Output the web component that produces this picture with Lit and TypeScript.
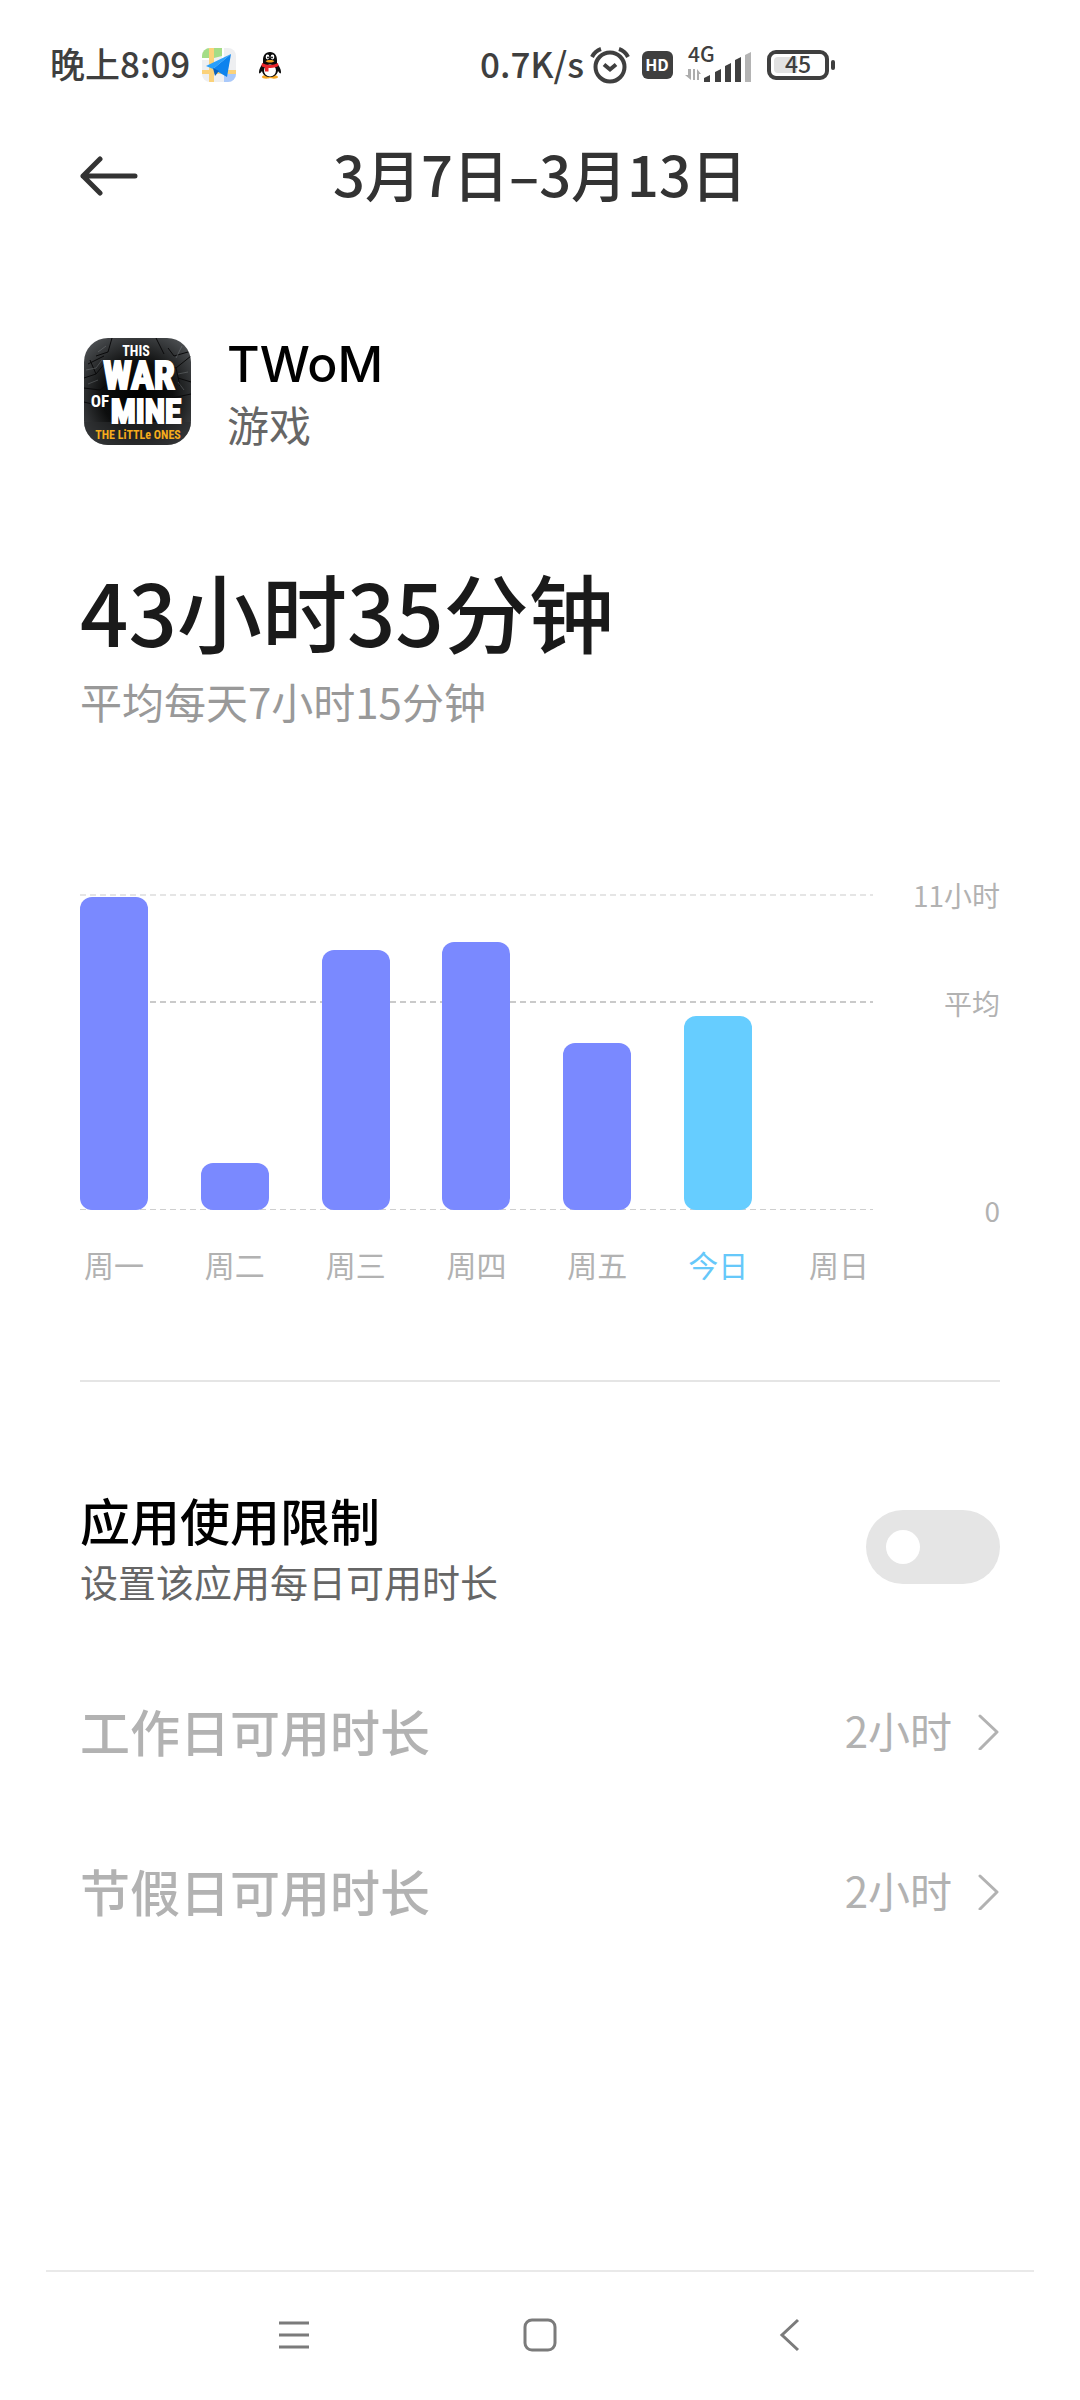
import { LitElement, html, css, svg } from "lit";
import { customElement, state } from "lit/decorators.js";
import { classMap } from "lit/directives/class-map.js";
import { styleMap } from "lit/directives/style-map.js";

interface Day {
  label: string;
  /** Share of the axis maximum, in percent. */
  share: number;
  today?: boolean;
}

const DAYS: Day[] = [
  { label: "周一", share: 99 },
  { label: "周二", share: 15 },
  { label: "周三", share: 82.4 },
  { label: "周四", share: 84.8 },
  { label: "周五", share: 52.8 },
  { label: "今日", share: 61.4, today: true },
  { label: "周日", share: 0 },
];

const GUIDES = [
  { label: "11小时", at: 99.7, kind: "max" },
  { label: "平均", at: 65.5, kind: "mean" },
  { label: "0", at: 0, kind: "base" },
];

const LIMITS = [
  { label: "工作日可用时长", value: "2小时" },
  { label: "节假日可用时长", value: "2小时" },
];

@customElement("status-bar")
export class StatusBar extends LitElement {
  static styles = css`
    :host {
      display: flex;
      align-items: center;
      height: 62px;
      padding: 34px 0 40px;
      color: #3f3f3f;
      font-size: 35px;
      font-weight: 500;
      line-height: 56px;
      white-space: nowrap;
    }
    svg { display: block; flex: none; overflow: visible; }
    span { padding-bottom: 4px; }
    .left {
      box-sizing: border-box;
      flex: 0 0 40%;
      display: flex;
      align-items: center;
      padding-left: 50px;
    }
    .map { margin-left: 12px; }
    .penguin { margin-left: 22px; }
    .right {
      display: flex;
      align-items: center;
      padding-left: 48px;
    }
    .alarm { margin-left: 6px; }
    .hd { margin-left: 12px; }
    .signal { margin-left: 12px; }
    .battery { margin-left: 14px; }
    text { font-family: "Noto Sans CJK SC", sans-serif; }
  `;

  render() {
    return html`
      <div class="left">
        <span>晚上8:09</span>
        <svg class="map" width="34" height="34" viewBox="0 0 34 34" aria-hidden="true">
          <clipPath id="mapClip"><rect width="34" height="34" rx="8" /></clipPath>
          <g clip-path="url(#mapClip)">
            <rect width="34" height="34" fill="#eeeff1" />
            <path d="M0 0h7v10H0z" fill="#a4dd86" />
            <path d="M12 0h8v8l-8 2z" fill="#a4dd86" />
            <path d="M22 26h12v8H22z" fill="#a9c9fb" />
            <path d="M7 0h5v34H7zM0 22h34v4H0z" fill="#fbd27a" />
            <path d="M20 0h2v22h-2zM0 10h7v2H0z" fill="#fff" />
          </g>
          <path d="M29 6L4 18l7 3z" fill="#29a0fb" />
          <path d="M29 6L11 21l14 8z" fill="#0d83ee" />
          <path d="M11 20l2 8 4-5z" fill="#0861c0" />
        </svg>
        <svg class="penguin" width="24" height="28" viewBox="0 0 24 28" aria-hidden="true">
          <path d="M4 26c0-2 4-2 7-1 3-1 9-1 9 1s-6 2-8 1c-2 1-8 1-8-1z" fill="#f5a623" />
          <path d="M12 1c5 0 7 4 7 8v3c2 3 4 6 4 9 0 2-1 2-3-1-1 4-4 6-8 6s-7-2-8-6c-2 3-3 3-3 1 0-3 2-6 4-9V9c0-4 2-8 7-8z" fill="#0b0b0b" />
          <ellipse cx="12" cy="19.500" rx="6" ry="6" fill="#fff" />
          <ellipse cx="9.500" cy="6" rx="1.800" ry="2.400" fill="#fff" />
          <ellipse cx="14.500" cy="6" rx="1.800" ry="2.400" fill="#fff" />
          <circle cx="10" cy="6.400" r="0.900" /><circle cx="14" cy="6.400" r="0.900" />
          <path d="M7.500 10c2-1.500 7-1.500 9 0-2 2-7 2-9 0z" fill="#f5a623" />
          <path d="M4 12c5 2.500 11 2.500 16 0l.500 3c-4 2-8 2-10 2v3.500H7V16.500c-1 0-3-1-3.500-1.500z" fill="#e8262b" />
        </svg>
      </div>
      <div class="right">
        <span>0.7K/s</span>
        <svg class="alarm" width="40" height="38" viewBox="0 0 40 38" fill="none" stroke="#3f3f3f" stroke-width="4" aria-hidden="true">
          <circle cx="20" cy="21" r="14.500" />
          <path d="M14 18.500l6 5 6-5" />
          <path d="M2 11Q5 5 11 3M38 11Q35 5 29 3" />
        </svg>
        <svg class="hd" width="31" height="30" viewBox="0 0 31 30" aria-hidden="true">
          <rect y="1" width="31" height="28" rx="6" fill="#3f3f3f" />
          <text x="15" y="21" text-anchor="middle" font-size="16" font-weight="700" fill="#fff">HD</text>
        </svg>
        <svg class="signal" width="68" height="40" viewBox="0 0 68 40" aria-hidden="true">
          <text x="3" y="17" font-size="21" font-weight="500" fill="#3f3f3f">4G</text>
          <path d="M3 24h3v11L0 30h3zM8 24h2v11H8zM12 35V24l4 5h-2v6z" fill="#adadad" />
          <path d="M19 33l6-3v7h-6zM30 27l6-3v13h-6zM40 21l6-3v19h-6zM50 15l6-3v25h-6z" fill="#3f3f3f" />
          <path d="M60 10l6-3v30h-6z" fill="#b4b4b4" />
        </svg>
        <svg class="battery" width="68" height="30" viewBox="0 0 68 30" aria-hidden="true">
          <rect x="2" y="2" width="58" height="26" rx="7" fill="none" stroke="#3f3f3f" stroke-width="4" />
          <path d="M11 7h19v16H11a4 4 0 0 1-4-4v-8a4 4 0 0 1 4-4z" fill="#e2e2e2" />
          <rect x="64" y="10" width="4" height="10" rx="2" fill="#3f3f3f" />
          <text x="31" y="23" text-anchor="middle" font-size="23" font-weight="500" fill="#3f3f3f">45</text>
        </svg>
      </div>
    `;
  }
}

@customElement("game-icon")
export class GameIcon extends LitElement {
  static styles = css`
    :host { display: block; flex: none; width: 107px; height: 107px; }
    svg { display: block; width: 100%; height: 100%; }
    .word,
    .scrawl {
      font-family: "Roboto Condensed", "Open Sans Condensed", Roboto, sans-serif;
      font-weight: 700;
    }
    .word { fill: #fff; stroke: #fff; }
    .scrawl { fill: #f6ac1c; }
  `;

  render() {
    return svg`
      <svg viewBox="0 0 107 107" role="img" aria-label="TWoM">
        <defs>
          <clipPath id="tile"><rect width="107" height="107" rx="24" /></clipPath>
          <radialGradient id="glow" cx="50%" cy="55%" r="66%">
            <stop offset="0" stop-color="#000" />
            <stop offset="0.500" stop-color="#0d0e0e" />
            <stop offset="1" stop-color="#4c4f52" />
          </radialGradient>
        </defs>
        <g clip-path="url(#tile)">
          <rect width="107" height="107" fill="url(#glow)" />
          <path d="M0 84h107v23H0z" fill="#2c2d2e" opacity="0.600" />
          <g fill="none" stroke="#0a0a0b" stroke-width="1">
            <path d="M0 40l12-4 10-12M12 36l-6-14M4 26L20 18M0 50l16 2 8-6M107 18L92 30l-8-4M92 30l4 18M107 44l-13-4M84 10l6 8 14-4M72 0l8 16M28 0l-4 14-12 4M88 60l19-4M0 64l8 2" />
          </g>
          <g fill="none" stroke="#85898c" stroke-width="1" opacity="0.400">
            <path d="M2 32l10-2 6-8M98 8l-6 12M104 34l-10 2M4 46l10-4M100 52l-6-8M22 8l-8 6" />
          </g>
        </g>
        <text class="word" x="52" y="18" text-anchor="middle" font-size="14" stroke-width="0">THIS</text>
        <text class="word" x="55" y="51" text-anchor="middle" font-size="38" stroke-width="2">WAR</text>
        <text class="word" x="16" y="69" text-anchor="middle" font-size="17" stroke-width="0">OF</text>
        <text class="word" x="62" y="85" text-anchor="middle" font-size="33" stroke-width="2">MINE</text>
        <text class="scrawl" x="54" y="101" text-anchor="middle" font-size="12">THE LiTTLe ONES</text>
      </svg>
    `;
  }
}

@customElement("usage-chart")
export class UsageChart extends LitElement {
  static styles = css`
    :host {
      display: grid;
      grid-template-columns: 1fr 127px;
      row-gap: 34px;
      color: #b2b2b2;
    }
    .plot {
      position: relative;
      display: flex;
      justify-content: space-between;
      align-items: flex-end;
      height: 316px;
    }
    .guide {
      position: absolute;
      left: 0;
      right: 0;
      height: 2px;
      background: repeating-linear-gradient(to right, #e5e5e5 0 6px, transparent 6px 10px);
    }
    .guide.mean { background: repeating-linear-gradient(to right, #cacaca 0 6px, transparent 6px 10px); }
    .guide.base { height: 1px; background: repeating-linear-gradient(to right, #cfcfcf 0 6px, transparent 6px 10px); }
    .guide.max { transform: translateY(1px); }
    .bar {
      position: relative;
      width: 68px;
      border-radius: 12px;
      background: #7a89ff;
    }
    .bar.today { background: #66cdff; }
    .axis { position: relative; }
    .tick {
      position: absolute;
      right: 0;
      font-size: 28px;
      line-height: 36px;
      transform: translateY(50%);
    }
    .names {
      display: flex;
      justify-content: space-between;
      font-size: 30px;
      line-height: 40px;
    }
    .name { width: 68px; text-align: center; }
    .name.today { color: #66c8fa; }
  `;

  render() {
    return html`
      <div class="plot">
        ${GUIDES.map(
          (g) => html`<div class="guide ${g.kind}" style=${styleMap({ bottom: `${g.at}%` })}></div>`
        )}
        ${DAYS.map(
          (d) => html`<div
            class=${classMap({ bar: true, today: !!d.today })}
            style=${styleMap({ height: `${d.share}%` })}
          ></div>`
        )}
      </div>
      <div class="axis">
        ${GUIDES.map(
          (g) => html`<span class="tick" style=${styleMap({ bottom: `${g.at}%` })}>${g.label}</span>`
        )}
      </div>
      <div class="names">
        ${DAYS.map(
          (d) => html`<span class=${classMap({ name: true, today: !!d.today })}>${d.label}</span>`
        )}
      </div>
    `;
  }
}

@customElement("system-nav")
export class SystemNav extends LitElement {
  static styles = css`
    :host { display: block; padding: 0 46px; }
    .keys {
      display: grid;
      grid-template-columns: repeat(3, 25%);
      justify-content: center;
      height: 128px;
      border-top: 2px solid #e9e9e9;
    }
    button {
      display: grid;
      place-items: center;
      padding: 0 0 2px;
      border: 0;
      background: none;
    }
    svg { display: block; fill: none; stroke: #7b7b7b; stroke-width: 3; }
  `;

  render() {
    return html`
      <nav class="keys">
        <button type="button" aria-label="最近任务">
          <svg width="36" height="36" viewBox="0 0 36 36"><path d="M4 6h30M4 18h30M4 30h30" /></svg>
        </button>
        <button type="button" aria-label="主页">
          <svg width="36" height="36" viewBox="0 0 36 36"><rect x="3" y="3" width="30" height="30" rx="7" /></svg>
        </button>
        <button type="button" aria-label="返回">
          <svg width="36" height="36" viewBox="0 0 36 36"><path d="M29 3L13 18l16 15" /></svg>
        </button>
      </nav>
    `;
  }
}

@customElement("app-root")
export class AppRoot extends LitElement {
  static styles = css`
    :host {
      display: flex;
      flex-direction: column;
      min-height: 100vh;
      background: #fff;
      color: #000;
      font-family: "Noto Sans CJK SC", sans-serif;
    }
    svg { display: block; flex: none; }
    button { font: inherit; color: inherit; padding: 0; border: 0; background: none; }
    header {
      display: grid;
      grid-template-columns: 1fr auto 1fr;
      align-items: center;
      height: 80px;
      padding: 0 80px;
      color: #333;
    }
    h1 { margin: 0; padding-bottom: 6px; font-size: 56px; font-weight: 500; line-height: 74px; }
    .back { justify-self: start; }
    main { flex: 1; padding: 0 80px; }
    .app {
      display: flex;
      align-items: center;
      gap: 36px;
      margin-top: 112px;
      padding-left: 4px;
    }
    .app-text { padding-top: 6px; line-height: 60px; }
    .app-name { margin: 0; font-family: Inter, "Noto Sans CJK SC", sans-serif; font-size: 50px; font-weight: 500; }
    .app-kind { margin: 0; font-size: 42px; color: #666; }
    .total { margin: 106px 0 0; font-size: 85px; font-weight: 500; line-height: 100px; color: #1a1a1a; }
    .mean { margin: 11px 0 0; font-size: 42px; line-height: 60px; color: #999; }
    .chart { margin-top: 163px; }
    hr { margin: 96px 0 0; border: 0; height: 2px; background: #e5e5e5; }
    .limit {
      display: flex;
      align-items: center;
      justify-content: space-between;
      margin-top: 100px;
    }
    .limit-text { padding-top: 6px; line-height: 62px; }
    .limit-title { display: block; font-size: 50px; font-weight: 500; }
    .limit-note { margin: 0; font-size: 38px; color: #666; }
    .switch {
      appearance: none;
      flex: none;
      display: flex;
      align-items: center;
      width: 134px;
      height: 74px;
      margin: 0;
      padding: 0 20px;
      border-radius: 37px;
      background: #e5e5e5;
    }
    .switch::before { content: ""; width: 34px; height: 34px; border-radius: 50%; background: #fff; }
    .switch:checked { justify-content: flex-end; background: #0d84ff; }
    .rows { margin: 38px 0 0; padding: 0; list-style: none; }
    .row {
      display: flex;
      align-items: center;
      width: 100%;
      height: 160px;
      color: #b2b2b2;
      line-height: 62px;
      text-align: left;
    }
    .row-name { flex: 1; font-size: 50px; font-weight: 500; }
    .row-value { margin-right: 24px; font-size: 42px; }
  `;

  @state() private limited = false;

  render() {
    return html`
      <status-bar></status-bar>
      <header>
        <button class="back" type="button" aria-label="返回">
          <svg width="58" height="42" viewBox="0 0 58 42" fill="none" stroke="#333" stroke-width="5" stroke-linecap="round" stroke-linejoin="round">
            <path d="M55 21H3M20 4L3 21l17 17" />
          </svg>
        </button>
        <h1>3月7日–3月13日</h1>
      </header>
      <main>
        <section class="app">
          <game-icon></game-icon>
          <div class="app-text">
            <h2 class="app-name">TWoM</h2>
            <p class="app-kind">游戏</p>
          </div>
        </section>
        <p class="total">43小时35分钟</p>
        <p class="mean">平均每天7小时15分钟</p>
        <usage-chart class="chart"></usage-chart>
        <hr />
        <section class="limit">
          <div class="limit-text">
            <label class="limit-title" for="limit">应用使用限制</label>
            <p class="limit-note" id="note">设置该应用每日可用时长</p>
          </div>
          <input
            class="switch"
            id="limit"
            type="checkbox"
            role="switch"
            aria-describedby="note"
            .checked=${this.limited}
            @change=${(e: Event) => (this.limited = (e.target as HTMLInputElement).checked)}
          />
        </section>
        <ul class="rows">
          ${LIMITS.map(
            (l) => html`<li>
              <button class="row" type="button" ?disabled=${!this.limited}>
                <span class="row-name">${l.label}</span>
                <span class="row-value">${l.value}</span>
                <svg width="24" height="40" viewBox="0 0 24 40" fill="none" stroke="#b2b2b2" stroke-width="3" stroke-linecap="round" stroke-linejoin="round" aria-hidden="true">
                  <path d="M4 6l17 16L4 39" />
                </svg>
              </button>
            </li>`
          )}
        </ul>
      </main>
      <system-nav></system-nav>
    `;
  }
}
